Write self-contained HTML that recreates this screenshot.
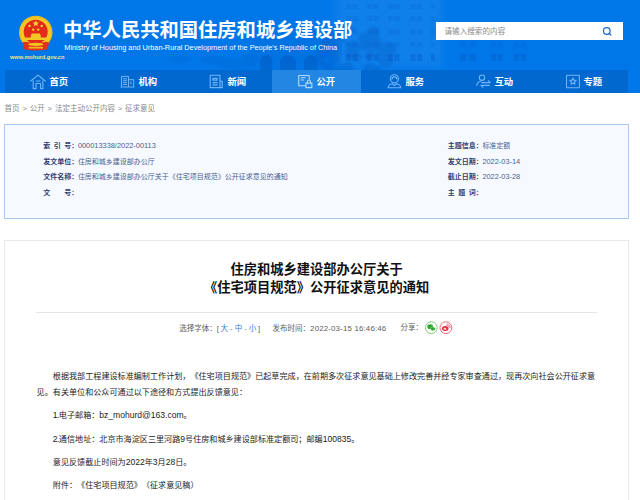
<!DOCTYPE html>
<html lang="zh-CN">
<head>
<meta charset="utf-8">
<title>住房和城乡建设部办公厅关于《住宅项目规范》公开征求意见的通知</title>
<style>
*{margin:0;padding:0;box-sizing:border-box}
html,body{width:640px;height:500px;overflow:hidden;background:#fff}
body{text-spacing-trim:space-all;font-family:"Liberation Sans","Noto Sans CJK SC",sans-serif;color:#333;position:relative}
a{text-decoration:none;color:inherit}
.abs{position:absolute;white-space:nowrap}
#banner{position:absolute;left:0;top:0;width:640px;height:93px;background:#0077e8;overflow:hidden}
#bld{position:absolute;left:0;top:0;width:640px;height:93px}
#emblem{position:absolute;left:14px;top:12px;width:44px;height:42px}
#site{left:10px;top:52.9px;font-size:5.6px;line-height:8px;font-weight:bold;color:#f5e486}
#h1{left:63.1px;top:17px;font-size:19.29px;line-height:28px;font-weight:bold;color:#fff}
#h2{left:64.3px;top:42.9px;font-size:7.3px;line-height:10px;color:#fff}
#search{position:absolute;left:436px;top:22px;width:187px;height:18.3px;background:#fff}
#search span{position:absolute;left:8.5px;top:.9px;line-height:18.3px;font-size:7.6px;color:#8a8a8a;white-space:nowrap}
#search svg{position:absolute;left:165.5px;top:4px;width:11px;height:11px}
#nav{position:absolute;left:5px;top:69.8px;width:623.2px;height:23px;background:#0068ce;display:flex}
#nav a{display:flex;width:89px;height:23px;align-items:center;justify-content:center;color:#fff;font-weight:bold;font-size:9.35px;line-height:23px;padding:2.2px 2px 0 0}
#nav a.on{background:#2486e3}
#nav a svg{overflow:visible;width:17px;height:16px;margin-right:3.5px;margin-top:-2.2px;flex:none}
#crumb{left:4.6px;top:103.2px;font-size:7.5px;line-height:11px;color:#8a8a8a;word-spacing:.8px}
#info{position:absolute;left:4.3px;top:124.1px;width:624.4px;height:94.6px;background:#f6f9ff;border:.7px solid #a9c9ee}
.row{position:absolute;white-space:nowrap;font-size:7px;line-height:10px;color:#4a5d92}
.row b{color:#2e3d72;font-weight:bold;display:inline-block;width:34.7px}
.row i{font-style:normal;font-size:7.4px}
#panel{position:absolute;left:4.3px;top:239.7px;width:624.4px;height:300px;border:.7px solid #e9e9ed;background:#fff}
.t{position:absolute;left:0;width:633.4px;text-align:center;font-weight:bold;font-size:13.26px;line-height:18.3px;color:#111;white-space:nowrap}
#hr{position:absolute;left:36px;top:311.6px;width:560.5px;height:.7px;background:#e6e6e6}
.m{position:absolute;white-space:nowrap;top:324px;font-size:7.5px;line-height:10px;color:#606060}
.m i{font-style:normal;color:#2f7dd8;margin:0 1.7px}
.p u{text-decoration:none;font-size:8.55px}
.p u.n{letter-spacing:-.55px}
.p{position:absolute;left:36.6px;width:561px;font-size:8.11px;line-height:15.6px;color:#1c1c1c;text-indent:16.22px;white-space:nowrap}
</style>
</head>
<body>
<div id="banner">
<svg id="bld" viewBox="0 0 640 93"><defs><filter id="bw" x="-30%" y="-30%" width="160%" height="160%"><feGaussianBlur stdDeviation="5"/></filter><filter id="b3" x="-20%" y="-20%" width="140%" height="140%"><feGaussianBlur stdDeviation="1"/></filter><filter id="b2"><feGaussianBlur stdDeviation=".5"/></filter></defs><rect x="335" y="-10" width="108" height="78" fill="#ffffff" opacity=".06" filter="url(#bw)"/><rect x="250" y="30" width="85" height="40" fill="#004cb0" opacity=".08" filter="url(#bw)"/><g fill="#004cb0" opacity=".13" filter="url(#b3)"><ellipse cx="214" cy="60" rx="14" ry="4"/><ellipse cx="236" cy="64" rx="20" ry="5"/><ellipse cx="178" cy="59" rx="12" ry="3"/><ellipse cx="250" cy="58" rx="8" ry="4"/></g><g fill="#0056c4" opacity=".16" filter="url(#b2)"><rect x="346" y="4" width="5" height="5"/><rect x="352.5" y="4" width="5" height="5"/><rect x="367" y="4" width="5" height="5"/><rect x="373.5" y="4" width="5" height="5"/><rect x="388" y="4" width="5" height="5"/><rect x="394.5" y="4" width="5" height="5"/><rect x="410.5" y="4" width="5" height="5"/><rect x="417" y="4" width="5" height="5"/><rect x="431" y="4" width="4" height="5"/><rect x="346" y="16" width="5" height="5"/><rect x="352.5" y="16" width="5" height="5"/><rect x="367" y="16" width="5" height="5"/><rect x="373.5" y="16" width="5" height="5"/><rect x="388" y="16" width="5" height="5"/><rect x="394.5" y="16" width="5" height="5"/><rect x="410.5" y="16" width="5" height="5"/><rect x="417" y="16" width="5" height="5"/><rect x="431" y="16" width="4" height="5"/><rect x="346" y="29" width="5" height="6"/><rect x="352.5" y="29" width="5" height="6"/><rect x="367" y="29" width="5" height="6"/><rect x="373.5" y="29" width="5" height="6"/><rect x="388" y="29" width="5" height="6"/><rect x="394.5" y="29" width="5" height="6"/><rect x="410.5" y="29" width="5" height="6"/><rect x="417" y="29" width="5" height="6"/><rect x="431" y="29" width="4" height="6"/><rect x="346" y="42" width="5" height="5"/><rect x="352.5" y="42" width="5" height="5"/><rect x="367" y="42" width="5" height="5"/><rect x="373.5" y="42" width="5" height="5"/><rect x="388" y="42" width="5" height="5"/><rect x="394.5" y="42" width="5" height="5"/><rect x="410.5" y="42" width="5" height="5"/><rect x="417" y="42" width="5" height="5"/><rect x="431" y="42" width="4" height="5"/><rect x="460" y="42" width="6" height="5"/><rect x="469" y="42" width="7" height="5"/><rect x="491" y="42" width="5" height="5"/><rect x="497.5" y="42" width="5" height="5"/><rect x="514" y="42" width="5" height="5"/><rect x="521" y="42" width="5" height="5"/></g><g fill="#0052c0" opacity=".3" filter="url(#b2)"><rect x="346" y="54" width="5" height="7"/><rect x="352.5" y="54" width="5" height="7"/><rect x="367" y="54" width="5" height="7"/><rect x="373.5" y="54" width="5" height="7"/><rect x="388" y="54" width="5" height="7"/><rect x="394.5" y="54" width="5" height="7"/><rect x="410.5" y="54" width="5" height="7"/><rect x="417" y="54" width="5" height="7"/><rect x="431" y="54" width="4" height="7"/><rect x="460" y="54" width="6" height="7"/><rect x="469" y="54" width="7" height="7"/><rect x="491" y="54" width="5" height="7"/><rect x="497.5" y="54" width="5" height="7"/><rect x="514" y="54" width="5" height="7"/><rect x="521" y="54" width="5" height="7"/></g><g fill="#0048ac" opacity=".2" filter="url(#b3)"><circle cx="352" cy="53" r="6.7"/><circle cx="353" cy="50" r="5.3"/><circle cx="332" cy="51" r="5.5"/><circle cx="341" cy="30" r="6.2"/><circle cx="368" cy="56" r="3.6"/><circle cx="319" cy="51" r="3.2"/><circle cx="332" cy="38" r="3.1"/><circle cx="353" cy="47" r="6.4"/><circle cx="357" cy="57" r="5.0"/><circle cx="368" cy="48" r="4.1"/><circle cx="382" cy="60" r="4.3"/><circle cx="335" cy="40" r="3.3"/><circle cx="376" cy="45" r="6.4"/><circle cx="347" cy="72" r="6.4"/><circle cx="387" cy="49" r="6.9"/><circle cx="348" cy="30" r="5.5"/><circle cx="377" cy="39" r="3.3"/><circle cx="343" cy="72" r="6.0"/><circle cx="327" cy="38" r="3.4"/><circle cx="323" cy="64" r="3.7"/><circle cx="361" cy="47" r="3.8"/><circle cx="374" cy="32" r="5.6"/><circle cx="327" cy="46" r="3.9"/><circle cx="339" cy="73" r="6.2"/><circle cx="341" cy="68" r="3.8"/><circle cx="348" cy="67" r="5.6"/><circle cx="334" cy="38" r="6.1"/><circle cx="343" cy="40" r="3.3"/><circle cx="325" cy="54" r="4.0"/><circle cx="364" cy="44" r="4.8"/><circle cx="391" cy="49" r="5.3"/><circle cx="330" cy="70" r="6.3"/><circle cx="337" cy="35" r="6.0"/><circle cx="364" cy="46" r="3.4"/><circle cx="336" cy="60" r="4.0"/><circle cx="381" cy="55" r="4.2"/><circle cx="331" cy="61" r="3.3"/><circle cx="335" cy="53" r="6.4"/><circle cx="365" cy="39" r="6.7"/><circle cx="338" cy="47" r="3.2"/><circle cx="331" cy="44" r="5.3"/><circle cx="328" cy="43" r="6.6"/><circle cx="371" cy="54" r="3.6"/><circle cx="387" cy="60" r="6.9"/><circle cx="320" cy="57" r="4.9"/><circle cx="374" cy="41" r="7.0"/><circle cx="324" cy="52" r="5.9"/><circle cx="386" cy="61" r="5.8"/><circle cx="378" cy="70" r="4.4"/><circle cx="370" cy="69" r="6.5"/></g><path d="M260 70V61.2a6.25 6.25 0 0 1 12.5 0V70zM280 70V63.0a8.00 8.00 0 0 1 16 0V70zM304 70V61.8a6.75 6.75 0 0 1 13.5 0V70z" fill="#0052b8" opacity=".42" filter="url(#b2)"/></svg>
<svg id="emblem" viewBox="14 12 44 42">
<circle cx="35.75" cy="32.4" r="16.7" fill="#efbc1e"/>
<circle cx="35.75" cy="32.4" r="15.2" fill="#f4c824"/>
<circle cx="35.7" cy="31.8" r="12" fill="#e32b1c"/>
<path d="M25.6 40v-2.6h5.2v-2.4l1.2-1.4h7.5l1.2 1.4v2.4h5.6v2.6z" fill="#f4c824"/>
<path d="M22.7 42.3q3.2-1.4 6 .3 3.4-1.6 7.1 0 3.7-1.6 7.1 0 2.8-1.7 6-.3l-1.2 6.9q-11.9 2.7-23.8 0z" fill="#e2301c"/>
<ellipse cx="35.8" cy="44.4" rx="7.6" ry="1.6" fill="#f2c422"/>
<path d="M28.7 46.8h14.3v1.8h-14.3z" fill="#f0b820"/>
<path d="M35.8 20.5l.95 2.1h2.3l-1.85 1.45.7 2.25-2.1-1.35-2.1 1.35.7-2.25-1.85-1.45h2.3z" fill="#f8d636"/>
<circle cx="29.5" cy="25.9" r="1.2" fill="#f8d636"/><circle cx="41.7" cy="25.9" r="1.2" fill="#f8d636"/>
<circle cx="33.2" cy="29.6" r="1.2" fill="#f8d636"/><circle cx="38.2" cy="29.6" r="1.2" fill="#f8d636"/>
</svg>
<div class="abs" id="site">www.mohurd.gov.cn</div>
<div class="abs" id="h1">中华人民共和国住房和城乡建设部</div>
<div class="abs" id="h2">Ministry of Housing and Urban-Rural Development of the People's Republic of China</div>
<div id="search"><span>请输入搜索的内容</span>
<svg viewBox="0 0 11 11"><circle cx="4.8" cy="5" r="3.3" fill="none" stroke="#1b68c8" stroke-width="1.25"/><path d="M7.3 7.5l1.6 1.6" stroke="#1b68c8" stroke-width="1.3" stroke-linecap="round"/></svg></div>
<div id="nav">
<a><svg viewBox="0 0 17 16"><path d="M1.4 8.2L9 2.1l7.6 6.1M4.2 7.5V15.6H7V10.5h4.6v5.1h2.3V7.5M7 8h4.6" fill="none" stroke="#72b4fb" stroke-width="1.1" stroke-linejoin="round"/></svg>首页</a>
<a><svg viewBox="0 0 17 16"><path d="M3.5 14V3.4h7V14M10.5 6.7h5.2V14M2.5 14h14M5 5.8h4M5 7.7h4M5 9.6h4M5 11.5h4M12.9 8.6v2.8" fill="none" stroke="#72b4fb" stroke-width="1"/></svg>机构</a>
<a><svg viewBox="0 0 17 16"><path d="M3.2 2.2h9.8v12.4H3.2zM13 8.2h2.2v6.4H13M5.9 5.4h4.2v1.7H5.9zM5.5 9.6h5M5.5 11.9h5" fill="none" stroke="#72b4fb" stroke-width="1.1" stroke-linejoin="round"/></svg>新闻</a>
<a class="on"><svg viewBox="0 0 17 16"><path d="M9.9 12.75H2.7V2.45h10.5V7M4.7 4.7h4.7M4.7 7h3.3M9.95 10.15h5.9v4.5h-5.9zM11.3 10.15V8.9a1.6 1.6 0 0 1 3.2 0v1.25" fill="none" stroke="#b4d8ff" stroke-width="1.1" stroke-linejoin="round"/></svg>公开</a>
<a><svg viewBox="0 0 17 16"><circle cx="9.4" cy="5.8" r="4.1" fill="none" stroke="#72b4fb" stroke-width="1.1" stroke-linejoin="round"/><path d="M3.1 14.7c.3-2.4 2.2-3.6 4.2-3.9l2.1 1.7 2.1-1.7c2 .3 3.9 1.5 4.2 3.9zM6.9 6.4a2.5 2.5 0 0 1 5 0" fill="none" stroke="#72b4fb" stroke-width="1.1" stroke-linejoin="round"/></svg>服务</a>
<a><svg viewBox="0 0 17 16"><circle cx="8" cy="4.7" r="2.7" fill="none" stroke="#72b4fb" stroke-width="1.1" stroke-linejoin="round"/><path d="M2.7 12.9c.2-2.8 1.8-4.5 4.6-4.7M7.4 9.6h8.9l-2.3-2.2M15.8 12.4H6.9l2.3 2.2" fill="none" stroke="#72b4fb" stroke-width="1.1" stroke-linejoin="round"/></svg>互动</a>
<a><svg viewBox="0 0 17 16"><rect x="3.5" y="2.2" width="12.9" height="12.6" rx=".8" fill="none" stroke="#72b4fb" stroke-width="1.1" stroke-linejoin="round"/><path d="M9.9 5.0L10.9 7.2L13.2 7.4L11.5 8.9L11.9 11.2L9.9 10.0L8.0 11.2L8.4 8.9L6.7 7.4L9.0 7.2z" fill="none" stroke="#72b4fb" stroke-width="1.1" stroke-linejoin="round"/></svg>专题</a>
</div>
</div>
<div class="abs" id="crumb">首页 &gt; 公开 &gt; 法定主动公开内容 &gt; 征求意见</div>
<div id="info"></div>
<div class="row" style="left:43.2px;top:141.1px"><b>索&ensp;引&ensp;号：</b><i>000013338/2022-00113</i></div>
<div class="row" style="left:43.2px;top:156.6px"><b>发文单位：</b>住房和城乡建设部办公厅</div>
<div class="row" style="left:43.2px;top:172.2px"><b>文件名称：</b>住房和城乡建设部办公厅关于《住宅项目规范》公开征求意见的通知</div>
<div class="row" style="left:43.2px;top:187.8px"><b>文　　号：</b></div>
<div class="row" style="left:447.7px;top:141.1px"><b>主题信息：</b>标准定额</div>
<div class="row" style="left:447.7px;top:156.6px"><b>发文日期：</b><i>2022-03-14</i></div>
<div class="row" style="left:447.7px;top:172.2px"><b>截止日期：</b><i>2022-03-28</i></div>
<div class="row" style="left:447.7px;top:187.8px"><b>主&ensp;题&ensp;词：</b></div>
<div id="panel"></div>
<div class="t" style="top:260.5px">住房和城乡建设部办公厅关于</div>
<div class="t" style="top:278.8px">《住宅项目规范》公开征求意见的通知</div>
<div id="hr"></div>
<div class="m" style="left:179.2px">选择字体：[<i>大 - 中 - 小</i>]</div>
<div class="m" style="left:272.6px">发布时间：<span style="font-size:7.9px;letter-spacing:.16px">2022-03-15 16:46:46</span></div>
<div class="m" style="left:400.4px;top:322.7px">分享：</div>
<svg class="abs" style="left:424px;top:320px;width:30px;height:16px" viewBox="424 320 30 16"><circle cx="431.3" cy="327.7" r="5.9" fill="#fff" stroke="#74c56e" stroke-width=".9"/><ellipse cx="430.2" cy="326.7" rx="2.9" ry="2.4" fill="#2fa82c"/><ellipse cx="432.9" cy="328.8" rx="2.4" ry="1.9" fill="#2fa82c" stroke="#eaffea" stroke-width=".3"/><circle cx="445.9" cy="327.7" r="5.9" fill="#fff" stroke="#ef5a6c" stroke-width=".9"/><ellipse cx="445.2" cy="328.6" rx="3.3" ry="2.5" fill="#e5303c"/><ellipse cx="444.9" cy="328.9" rx="1.5" ry="1.1" fill="#fbe9ea"/><circle cx="444.7" cy="329" r=".6" fill="#e5303c"/><path d="M446.8 325.4a2 2 0 0 1 2.5 2.3M446.9 324.1a3.3 3.3 0 0 1 3.4 3.4" fill="none" stroke="#ee4a78" stroke-width=".7" stroke-linecap="round"/></svg>
<div class="p" style="top:369.4px">根据我部工程建设标准编制工作计划，《住宅项目规范》已起草完成，在前期多次征求意见基础上修改完善并经专家审查通过，现再次向社会公开征求意</div>
<div class="p" style="top:385.0px;text-indent:0">见。有关单位和公众可通过以下途径和方式提出反馈意见：</div>
<div class="p" style="top:408.3px"><u class="n">1.</u>电子邮箱：<u>bz_mohurd@163.com</u>。</div>
<div class="p" style="top:431.6px"><u class="n">2.</u>通信地址：北京市海淀区三里河路<u>9</u>号住房和城乡建设部标准定额司；邮编<u>100835</u>。</div>
<div class="p" style="top:454.9px">意见反馈截止时间为<u>2022</u>年<u>3</u>月<u>28</u>日。</div>
<div class="p" style="top:478.2px">附件：《住宅项目规范》（征求意见稿）</div>
</body>
</html>
